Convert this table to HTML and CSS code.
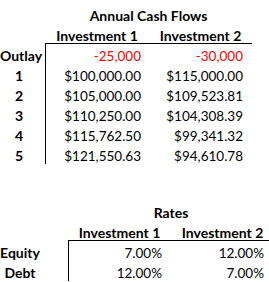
FILE: index.html
```html
<!DOCTYPE html>
<html>
<head>
<meta charset="utf-8">
<link rel="stylesheet" href="styles.css">
</head>
<body>
<div class="page">
  <div class="cash">
    <div class="cell label"></div>
    <div class="cell title span2">Annual Cash Flows</div>

    <div class="cell label"></div>
    <div class="cell head under">Investment 1</div>
    <div class="cell head under">Investment 2</div>

    <div class="cell label clabel">Outlay</div>
    <div class="cell num b1 left neg">-25,000</div>
    <div class="cell num b2 neg">-30,000</div>

    <div class="cell label clabel">1</div>
    <div class="cell num b1 left">$100,000.00</div>
    <div class="cell num b2">$115,000.00</div>

    <div class="cell label clabel">2</div>
    <div class="cell num b1 left">$105,000.00</div>
    <div class="cell num b2">$109,523.81</div>

    <div class="cell label clabel">3</div>
    <div class="cell num b1 left">$110,250.00</div>
    <div class="cell num b2">$104,308.39</div>

    <div class="cell label clabel">4</div>
    <div class="cell num b1 left">$115,762.50</div>
    <div class="cell num b2">$99,341.32</div>

    <div class="cell label clabel">5</div>
    <div class="cell num b1 left">$121,550.63</div>
    <div class="cell num b2">$94,610.78</div>
  </div>

  <div class="rates">
    <div class="cell label"></div>
    <div class="cell title span2">Rates</div>

    <div class="cell label"></div>
    <div class="cell head under">Investment 1</div>
    <div class="cell head under">Investment 2</div>

    <div class="cell label rlabel">Equity</div>
    <div class="cell num r1 left">7.00%</div>
    <div class="cell num r2">12.00%</div>

    <div class="cell label rlabel">Debt</div>
    <div class="cell num r1 left">12.00%</div>
    <div class="cell num r2">7.00%</div>
  </div>
</div>
</body>
</html>
```

FILE: styles.css
```css
html, body {
  margin: 0;
  padding: 0;
  background: #ffffff;
}

body {
  width: 269px;
  height: 282px;
  overflow: hidden;
  font-family: "Lato", "Open Sans", sans-serif;
  font-size: 14px;
  color: #000000;
}

.page {
  padding-top: 4px;
}

.cash {
  display: grid;
  grid-template-columns: 45px 104px 103px;
  grid-auto-rows: 20px;
}

.rates {
  display: grid;
  grid-template-columns: 68px 103px 103px;
  grid-auto-rows: 20px;
  margin-top: 37px;
}

.cell {
  box-sizing: border-box;
  line-height: 20px;
  white-space: nowrap;
  padding-top: 2px;
}

.label {
  font-weight: bold;
  text-align: center;
}

.clabel {
  padding-right: 7px;
}

.rlabel {
  padding-right: 28px;
}

.title {
  font-weight: bold;
  text-align: center;
}

.span2 {
  grid-column: span 2;
}

.head {
  font-weight: bold;
  text-align: center;
}

.under {
  border-bottom: 1px solid #000000;
}

.num {
  text-align: right;
  font-size: 13.5px;
}

.left {
  border-left: 1px solid #000000;
}

.b1 { padding-right: 8px; }
.b2 { padding-right: 9px; }
.r1 { padding-right: 9px; }
.r2 { padding-right: 10px; }

.neg {
  color: #ff0000;
}
```
